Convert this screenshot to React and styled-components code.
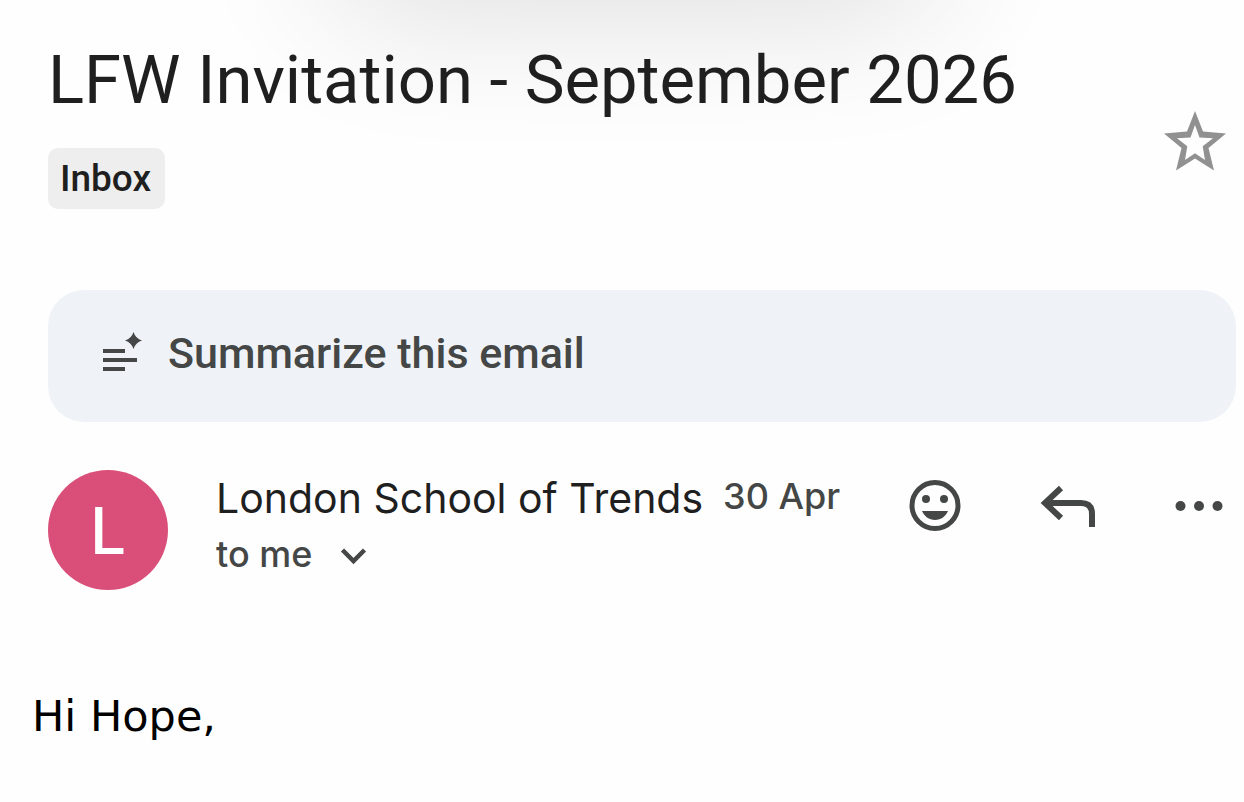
import React, { useState } from 'react';
import styled, { createGlobalStyle } from 'styled-components';

const GlobalStyle = createGlobalStyle`
  * {
    box-sizing: border-box;
  }

  body {
    margin: 0;
    background: #fefefe;
    color: #1f1f1f;
    font-family: Roboto, "Open Sans", sans-serif;
  }
`;

const Page = styled.main`
  position: relative;
  overflow: hidden;
  padding: 40px 8px 48px 48px;
`;

const TopShadow = styled.div`
  position: absolute;
  top: -300px;
  left: 27%;
  right: 25%;
  height: 300px;
  border-radius: 40px;
  box-shadow: 0 0 152px rgba(0, 0, 0, 0.16);
  pointer-events: none;
`;

const Header = styled.header`
  position: relative;
  display: flex;
  align-items: center;
  justify-content: space-between;
`;

const Subject = styled.h1`
  margin: 0 0 28px;
  font-size: 67px;
  line-height: 80px;
  font-weight: 400;
`;

const Label = styled.button`
  display: block;
  height: 61px;
  padding: 0 14px 0 12px;
  border: none;
  border-radius: 10px;
  background: #eeeeee;
  color: #1f1f1f;
  font: 500 37px/60px Roboto, sans-serif;
  cursor: pointer;
`;

const IconButton = styled.button`
  display: flex;
  flex: none;
  align-items: center;
  justify-content: center;
  padding: 0;
  border: none;
  background: none;
  color: ${(props) => props.$color || '#444746'};
  cursor: pointer;
`;

const StarButton = styled(IconButton)`
  margin-right: 4px;
  margin-top: 34px;
`;

const SummaryButton = styled.button`
  display: flex;
  align-items: center;
  width: 100%;
  height: 132px;
  margin: 81px 0 48px;
  padding: 0 48px 6px;
  gap: 24px;
  border: none;
  border-radius: 36px;
  background: #eff3f8;
  color: #444746;
  font: 500 43px/52px Roboto, sans-serif;
  cursor: pointer;
`;

const MessageHeader = styled.section`
  display: flex;
  align-items: flex-start;
`;

const Avatar = styled.div`
  display: flex;
  flex: none;
  align-items: center;
  justify-content: center;
  width: 120px;
  height: 120px;
  padding-top: 2px;
  border-radius: 50%;
  background: #da4f79;
  color: #fff;
  font: 500 64px/80px Inter, sans-serif;
`;

const Sender = styled.div`
  flex: 1;
  min-width: 0;
  margin-left: 48px;
  font-family: Inter, sans-serif;
`;

const SenderLine = styled.div`
  display: flex;
  align-items: flex-start;
  gap: 20px;
  white-space: nowrap;
`;

const SenderName = styled.span`
  font-size: 41px;
  line-height: 56px;
`;

const SentDate = styled.time`
  color: #444746;
  font-size: 36px;
  font-weight: 500;
  line-height: 52px;
`;

const Recipient = styled.button`
  display: flex;
  align-items: center;
  gap: 26px;
  padding: 0;
  border: none;
  background: none;
  color: #444746;
  font: 500 36px/56px Inter, sans-serif;
  cursor: pointer;
`;

const Actions = styled.div`
  display: flex;
  gap: 72px;
  margin-top: 6px;
  padding-right: 7px;
`;

const Body = styled.article`
  margin: 98px 0 0 -16px;
  color: #000;
  font: 43px/56px "DejaVu Sans", sans-serif;

  p {
    margin: 0;
  }
`;

const StarIcon = ({ filled }) => (
  <svg width="74" height="74" viewBox="0 0 74 74" fill="currentColor" aria-hidden="true">
    {filled ? (
      <path d="M37 6l8 20 22.500 2.500-18 14.500 6.500 22-19-12-19 12 6-22L6 28.500 29 26z" />
    ) : (
      <path
        fillRule="evenodd"
        d="M37 6 45 26.500 68 28.500 50.500 43 56 65.500 37 53.500 18 65.500 23.500 43 6 28.500 29 26.500zM37 20l-4.500 12.500-13.500.8 10.300 8L27 55l10-6.800L47 55l-2.300-13.700 10.300-8-13.500-.8z"
      />
    )}
  </svg>
);

const SummaryIcon = () => (
  <svg width="48" height="48" viewBox="0 0 48 48" fill="currentColor" aria-hidden="true">
    <path d="M7 20h22v4H7zM7 29h34v4H7zM7 38h22v4H7z" />
    <path d="M37.5 3q2 6.500 8.500 8.500-6.500 2-8.500 8.500-2-6.500-8.500-8.500 6.500-2 8.500-8.500z" />
  </svg>
);

const SmileIcon = () => (
  <svg width="60" height="60" viewBox="0 0 60 60" fill="currentColor" aria-hidden="true">
    <circle cx="30" cy="29.5" r="23" fill="none" stroke="currentColor" strokeWidth="5" />
    <circle cx="21" cy="23" r="4" />
    <circle cx="39" cy="23" r="4" />
    <path d="M17 35h26C41 40 36 44 30 44s-11-4-13-9z" />
  </svg>
);

const ReplyIcon = () => (
  <svg width="60" height="60" viewBox="0 0 60 60" fill="none" stroke="currentColor" strokeWidth="6" aria-hidden="true">
    <path d="M24 12 8 27 24 42M8 27H44Q55 27 55 38V51" />
  </svg>
);

const MoreIcon = () => (
  <svg width="60" height="60" viewBox="0 0 60 60" fill="currentColor" aria-hidden="true">
    <circle cx="11.5" cy="30" r="5" />
    <circle cx="30" cy="30" r="5" />
    <circle cx="48.5" cy="30" r="5" />
  </svg>
);

const ChevronIcon = () => (
  <svg width="32" height="32" viewBox="0 0 32 32" fill="none" stroke="currentColor" strokeWidth="4.5" aria-hidden="true">
    <path d="m4.500 12 11 11 11-11" />
  </svg>
);

const App = () => {
  const [starred, setStarred] = useState(false);

  return (
    <>
      <GlobalStyle />
      <Page>
        <TopShadow />
        <Header>
          <div>
            <Subject>LFW Invitation - September 2026</Subject>
            <Label>Inbox</Label>
          </div>
          <StarButton
            $color="#919191"
            aria-label="Star"
            aria-pressed={starred}
            onClick={() => setStarred(!starred)}
          >
            <StarIcon filled={starred} />
          </StarButton>
        </Header>

        <SummaryButton>
          <SummaryIcon />
          Summarize this email
        </SummaryButton>

        <MessageHeader>
          <Avatar>L</Avatar>
          <Sender>
            <SenderLine>
              <SenderName>London School of Trends</SenderName>
              <SentDate>30 Apr</SentDate>
            </SenderLine>
            <Recipient>
              to me
              <ChevronIcon />
            </Recipient>
          </Sender>
          <Actions>
            <IconButton aria-label="Add reaction">
              <SmileIcon />
            </IconButton>
            <IconButton aria-label="Reply">
              <ReplyIcon />
            </IconButton>
            <IconButton aria-label="More">
              <MoreIcon />
            </IconButton>
          </Actions>
        </MessageHeader>

        <Body>
          <p>Hi Hope,</p>
        </Body>
      </Page>
    </>
  );
};

export default App;
